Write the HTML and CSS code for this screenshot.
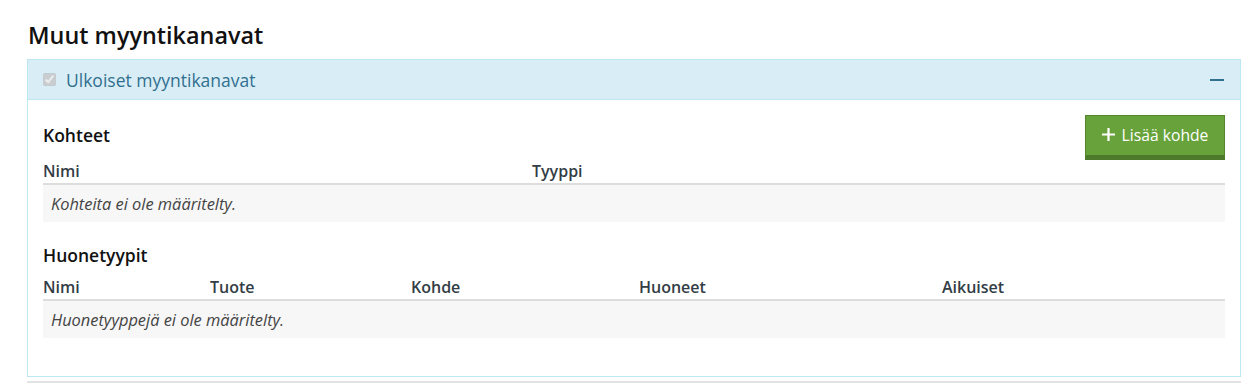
FILE: index.html
```html
<!DOCTYPE html>
<html lang="fi">

<head>
    <meta charset="UTF-8">
    <title>Muut myyntikanavat</title>
    <link rel="stylesheet" href="styles.css">
</head>

<body>

    <div class="page">
        <h2 class="section-title">Muut myyntikanavat</h2>

        <div class="panel">
            <div class="panel-heading">
                <label class="panel-title">
                    <input type="checkbox" checked disabled>
                    <span>Ulkoiset myyntikanavat</span>
                </label>
                <span class="collapse-icon"></span>
            </div>

            <div class="panel-body">
                <div class="block-head">
                    <h4>Kohteet</h4>
                    <button class="btn-add">
                        <svg class="plus" width="13" height="13" viewBox="0 0 13 13">
                            <path d="M6.5 0v13M0 6.5h13" stroke="#fff" stroke-width="2.2" fill="none"/>
                        </svg>
                        Lisää kohde
                    </button>
                </div>
                <table class="list-table">
                    <thead>
                        <tr>
                            <th class="col-half">Nimi</th>
                            <th>Tyyppi</th>
                        </tr>
                    </thead>
                    <tbody>
                        <tr class="empty-row">
                            <td colspan="2">Kohteita ei ole määritelty.</td>
                        </tr>
                    </tbody>
                </table>

                <div class="block-head">
                    <h4>Huonetyypit</h4>
                </div>
                <table class="list-table">
                    <thead>
                        <tr>
                            <th class="col-nimi">Nimi</th>
                            <th class="col-tuote">Tuote</th>
                            <th class="col-kohde">Kohde</th>
                            <th class="col-huoneet">Huoneet</th>
                            <th>Aikuiset</th>
                        </tr>
                    </thead>
                    <tbody>
                        <tr class="empty-row">
                            <td colspan="5">Huonetyyppejä ei ole määritelty.</td>
                        </tr>
                    </tbody>
                </table>
            </div>
        </div>

        <div class="panel-next"></div>
    </div>

</body>

</html>
```

FILE: styles.css
```css
body,
html {
    margin: 0;
    padding: 0;
    background: #fff;
    font-family: "Open Sans", "Noto Sans", sans-serif;
    color: #222;
}

.page {
    padding: 20px 15px 0 27px;
}

.section-title {
    font-size: 23.4px;
    font-weight: 600;
    margin: 0 0 9px 1px;
    line-height: 30px;
    color: #111;
}

.panel {
    border: 1px solid #bce8f1;
    background: #fff;
}

.panel-heading {
    display: flex;
    align-items: center;
    justify-content: space-between;
    height: 39px;
    padding: 0 16px 0 15px;
    background-color: #d9edf7;
    border-bottom: 1px solid #bce8f1;
    color: #31708f;
}

.panel-title {
    display: flex;
    align-items: center;
    font-size: 17.5px;
}

.panel-title input {
    width: 13px;
    height: 13px;
    margin: 0 10px 0 0;
}

/* viiva = sulje-ikoni */
.collapse-icon {
    width: 14px;
    height: 2px;
    background-color: #31708f;
}

.panel-body {
    padding: 15px 15px 38px 15px;
}

.block-head {
    display: flex;
    justify-content: space-between;
    align-items: flex-start;
}

.block-head h4 {
    margin: 9px 0 10px 0;
    font-size: 17.5px;
    font-weight: 600;
    line-height: 22px;
    color: #111;
}

.btn-add {
    display: flex;
    align-items: center;
    justify-content: center;
    gap: 7px;
    width: 140px;
    height: 45px;
    padding: 0 0 2px 0;
    font-family: inherit;
    font-size: 15.7px;
    color: #fff;
    background-color: #67a23a;
    border: 1px solid #55862f;
    border-bottom: 5px solid #4c7a2a;
    cursor: pointer;
}

.list-table {
    width: 100%;
    border-collapse: collapse;
    margin-bottom: 13px;
}

.list-table:last-child {
    margin-bottom: 0;
}

.list-table th {
    text-align: left;
    font-size: 16px;
    font-weight: 600;
    color: #333d45;
    padding: 0 0 1px 0;
    line-height: 22px;
    border-bottom: 2px solid #ddd;
}

.col-half {
    width: 489px;
}

.col-nimi {
    width: 167px;
}

.col-tuote {
    width: 201px;
}

.col-kohde {
    width: 228px;
}

.col-huoneet {
    width: 303px;
}

.empty-row td {
    background-color: #f7f7f7;
    font-style: italic;
    font-size: 16.4px;
    color: #444;
    padding: 8px 8px 8px 8px;
    line-height: 21px;
}

.panel-next {
    margin-top: 4px;
    border-top: 2px solid #e3e3e3;
    height: 10px;
}
```
